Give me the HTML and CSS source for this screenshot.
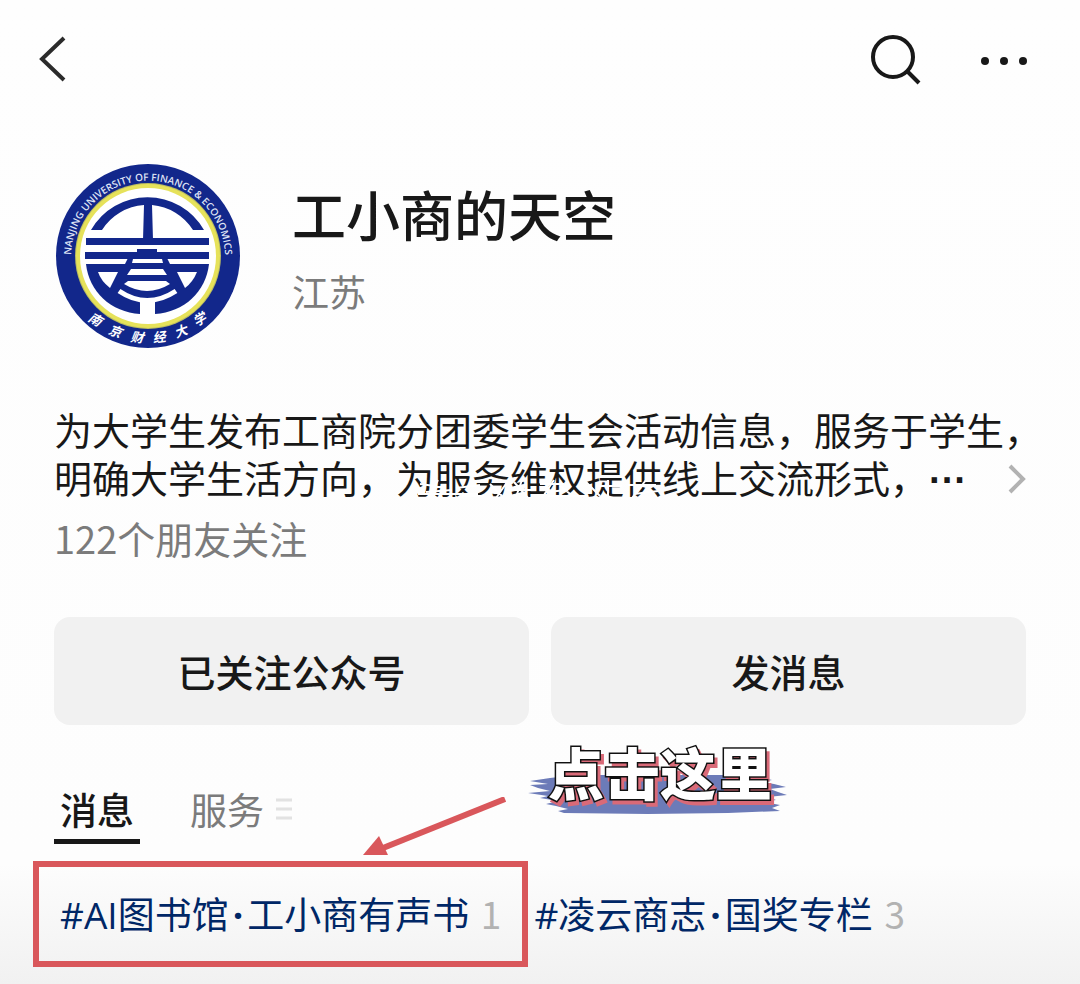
FILE: index.html
```html
<!DOCTYPE html>
<html lang="zh-CN">
<head>
    <meta charset="UTF-8">
    <meta name="viewport" content="width=device-width, initial-scale=1.0">
    <title>工小商的天空</title>
    <link rel="stylesheet" href="styles.css">
</head>
<body>
<header class="navbar">
    <button class="icon-btn" aria-label="返回">
        <svg width="28" height="48" viewBox="0 0 28 48"><path d="M26 3 L4 24 L26 45" fill="none" stroke="#2b2b2b" stroke-width="4"/></svg>
    </button>
    <div class="nav-actions">
        <button class="icon-btn" aria-label="搜索">
            <svg width="52" height="52" viewBox="0 0 52 52" fill="none" stroke="#181818" stroke-width="4"><circle cx="23" cy="24" r="20"/><path d="M37 38 L49 50"/></svg>
        </button>
        <button class="icon-btn" aria-label="更多">
            <svg width="48" height="52" viewBox="0 0 48 52" fill="#181818"><circle cx="5" cy="28" r="4"/><circle cx="24" cy="28" r="4"/><circle cx="43" cy="28" r="4"/></svg>
        </button>
    </div>
</header>

<main class="content">
    <section class="profile">
        <svg class="avatar" viewBox="0 0 188 188" role="img" aria-label="南京财经大学">
            <defs>
                <path id="ringTop" d="M18 108 A77 77 0 1 1 170 108"/>
            </defs>
            <circle cx="94" cy="94" r="92" fill="#12278b"/>
            <circle cx="94" cy="94" r="73" fill="#b9bb62"/>
            <circle cx="94" cy="94" r="72" fill="#e6e25a"/>
            <circle cx="94" cy="94" r="68" fill="#fff"/>
            <g fill="#12278b">
                <path d="M37 68 A65 65 0 0 1 150 68 H139 A54 54 0 0 0 98 43 L99 78 H89 L90 43 A54 54 0 0 0 48 68 Z"/>
                <path d="M32 76 H155 V83 H32 Z M31 90 H155 V97 H31 Z M83 87 H103 V92 H83 Z"/>
                <path d="M74 96 H113 L117 104 H70 Z"/>
                <path d="M32 102 H155 C152 130 130 150 101 152 H86 C57 150 35 130 32 102 Z"/>
            </g>
            <g fill="#fff">
                <path d="M79 97 H108 L109 101 H78 Z"/>
                <path d="M77 107 H109 L113 113 H73 Z"/>
                <path d="M74 119 H112 L116 122 Q93 136 70 122 Z"/>
                <path d="M44 110 H64 L56 126 Q47 119 44 110 Z"/>
                <path d="M123 110 H143 Q139 120 131 126 Z"/>
                <path d="M86 138 H101 V154 H86 Z"/>
            </g>
            <path d="M65 129 Q93 148 122 129" fill="none" stroke="#fff" stroke-width="5"/>
            <text class="seal-en"><textPath href="#ringTop" startOffset="50%" text-anchor="middle">NANJING UNIVERSITY OF FINANCE &amp; ECONOMICS</textPath></text>
            <g class="seal-cn">
                <text x="41" y="162" transform="rotate(30 41 158)">南</text>
                <text x="61" y="174" transform="rotate(20 61 170)">京</text>
                <text x="83" y="180" transform="rotate(7 83 175)">财</text>
                <text x="105" y="180" transform="rotate(-7 105 175)">经</text>
                <text x="127" y="174" transform="rotate(-20 127 170)">大</text>
                <text x="146" y="162" transform="rotate(-30 146 158)">学</text>
            </g>
        </svg>
        <div class="profile-text">
            <h1>工小商的天空</h1>
            <p class="region">江苏</p>
        </div>
    </section>

    <section class="about">
        <a class="bio" href="#about">
            <span>为大学生发布工商院分团委学生会活动信息，服务于学生，<br>明确大学生活方向，为服务维权提供线上交流形式，<span class="more">···</span></span>
            <svg class="chevron" width="18" height="32" viewBox="0 0 18 32"><path d="M2 3 L15 16 L2 29" fill="none" stroke="#b2b2b2" stroke-width="4"/></svg>
            <svg class="scratch" width="248" height="24" viewBox="0 0 248 24"><path d="M2 6 L24 9 M8 14 L34 12 M20 2 L10 20 M38 10 L62 7 M44 18 H66 M72 6 L84 18 M90 3 L78 20 M88 12 H118 M96 4 L110 20 M104 2 L98 19 M122 6 H146 M128 14 L150 12 M136 2 L124 20 M142 8 L156 19 M168 4 L182 18 M178 8 H204 M190 2 V20 M210 7 H238 M216 16 L240 13 M228 2 L214 20 M0 16 H60 M130 18 H170" fill="none" stroke="#fff" stroke-width="2"/></svg>
        </a>
        <p class="friends">122个朋友关注</p>
    </section>

    <div class="buttons">
        <button>已关注公众号</button>
        <button>发消息</button>
    </div>

    <nav class="tabs">
        <a class="tab active" href="#messages">消息</a>
        <a class="tab" href="#services">服务
            <svg width="16" height="22" viewBox="0 0 16 22"><path d="M0 2 H16 M0 11 H16 M0 20 H16" stroke="#e2e2e2" stroke-width="3"/></svg>
        </a>
        <div class="callout">
            <svg class="brush" viewBox="0 0 260 40" preserveAspectRatio="none"><path d="M22 3 L48 0 L205 0 L230 2 L244 5 L234 7 L246 9 L258 12 L242 14 L250 17 L259 20 L240 22 L248 25 L236 27 L252 30 L244 33 L252 36 L200 38 L120 39 L36 38 L30 36 L40 34 L28 31 L18 29 L30 26 L12 23 L20 21 L0 18 L22 16 L10 13 L2 10 L20 9 L2 6 Z" fill="#6c7bb8"/></svg>
            <span>点击这里</span>
        </div>
        <svg class="arrow" width="144" height="60" viewBox="0 0 144 60"><path d="M142 2 L20 51" stroke="#d9575b" stroke-width="6"/><path d="M0 58 L16 39 L25 58 Z" fill="#d9575b"/></svg>
    </nav>
</main>

<footer class="topics">
    <a class="topic marked" href="#ai">#AI图书馆<i>·</i>工小商有声书 <small>1</small></a>
    <a class="topic" href="#lingyun">#凌云商志<i>·</i>国奖专栏 <small>3</small></a>
</footer>
</body>
</html>
```
FILE: styles.css
```css
* {
    margin: 0;
    padding: 0;
    box-sizing: border-box;
}
body {
    min-height: 100vh;
    font-family: "Noto Sans CJK SC", sans-serif;
    color: #181818;
    background: linear-gradient(to top, #f1f1f1, #fdfdfd 120px, #fefefe);
    overflow-x: hidden;
}
button {
    border: none;
    background: none;
    font-family: inherit;
    color: inherit;
    cursor: pointer;
}
a {
    color: inherit;
    text-decoration: none;
}
svg {
    display: block;
}
.navbar {
    display: flex;
    justify-content: space-between;
    align-items: center;
    height: 118px;
    padding: 0 52px 0 38px;
}
.nav-actions {
    display: flex;
    gap: 58px;
}
.content {
    padding: 0 54px;
}
.profile {
    display: flex;
    gap: 50px;
    padding-top: 44px;
}
.avatar {
    width: 188px;
    height: 188px;
}
.seal-en {
    font: 600 10px "Open Sans", sans-serif;
    fill: #dfe3f5;
}
.seal-cn {
    font-size: 13px;
    font-weight: bold;
    font-style: italic;
    fill: #fff;
    text-anchor: middle;
}
.profile-text {
    padding-top: 14px;
}
h1 {
    font-size: 54px;
    line-height: 76px;
    font-weight: 500;
}
.region {
    padding-top: 13px;
    font-size: 37px;
    line-height: 52px;
    color: #7b7b7b;
}
.about {
    padding-top: 55px;
}
.bio {
    position: relative;
    display: flex;
    justify-content: space-between;
    align-items: flex-end;
    font-size: 38px;
    line-height: 48px;
    white-space: nowrap;
}
.bio > span {
    flex: 1;
    min-width: 0;
}
.more {
    padding-left: 20px;
    font-family: "Liberation Sans", sans-serif;
    font-weight: bold;
}
.chevron {
    margin-bottom: 9px;
}
.scratch {
    position: absolute;
    left: 364px;
    bottom: 2px;
}
.friends {
    padding-top: 8px;
    font-size: 38px;
    line-height: 52px;
    color: #7b7b7b;
}
.buttons {
    display: grid;
    grid-template-columns: 1fr 1fr;
    gap: 22px;
    padding-top: 53px;
}
.buttons button {
    height: 108px;
    padding-bottom: 2px;
    border-radius: 16px;
    background: #f1f1f1;
    font-size: 38px;
    font-weight: 500;
}
.tabs {
    position: relative;
    display: flex;
    gap: 44px;
    padding-top: 56px;
}
.tab {
    display: flex;
    align-items: center;
    gap: 12px;
    height: 63px;
    padding: 0 6px 7px;
    font-size: 37px;
    color: #7b7b7b;
}
.active {
    border-bottom: 5px solid #181818;
    padding-bottom: 2px;
    font-weight: 500;
    color: #181818;
}
.callout {
    position: absolute;
    left: 474px;
    top: 8px;
    width: 260px;
    padding-left: 20px;
    font-size: 56px;
    line-height: 76px;
    font-weight: 900;
    color: #fff;
    white-space: nowrap;
}
.callout span {
    position: relative;
    -webkit-text-stroke: 3px #111;
    paint-order: stroke fill;
    filter: drop-shadow(3px 4px 0 #d96a78);
}
.brush {
    position: absolute;
    left: 0;
    top: 42px;
    width: 260px;
    height: 40px;
}
.arrow {
    position: absolute;
    left: 309px;
    top: 72px;
}
.topics {
    display: flex;
    gap: 6px;
    padding: 17px 33px;
    font-family: "Open Sans", "Noto Sans CJK SC", sans-serif;
    font-size: 37px;
    line-height: 52px;
    white-space: nowrap;
}
.topic {
    padding: 26px 0;
    color: #002766;
}
.marked {
    padding: 20px 21px;
    border: 6px solid #d9575b;
}
.topic i {
    font-style: normal;
    font-weight: bold;
    padding: 0 4px;
}
.topic small {
    padding-left: 2px;
    font-family: "Noto Sans CJK SC", sans-serif;
    font-size: 37px;
    color: #b2b2b2;
}
```
